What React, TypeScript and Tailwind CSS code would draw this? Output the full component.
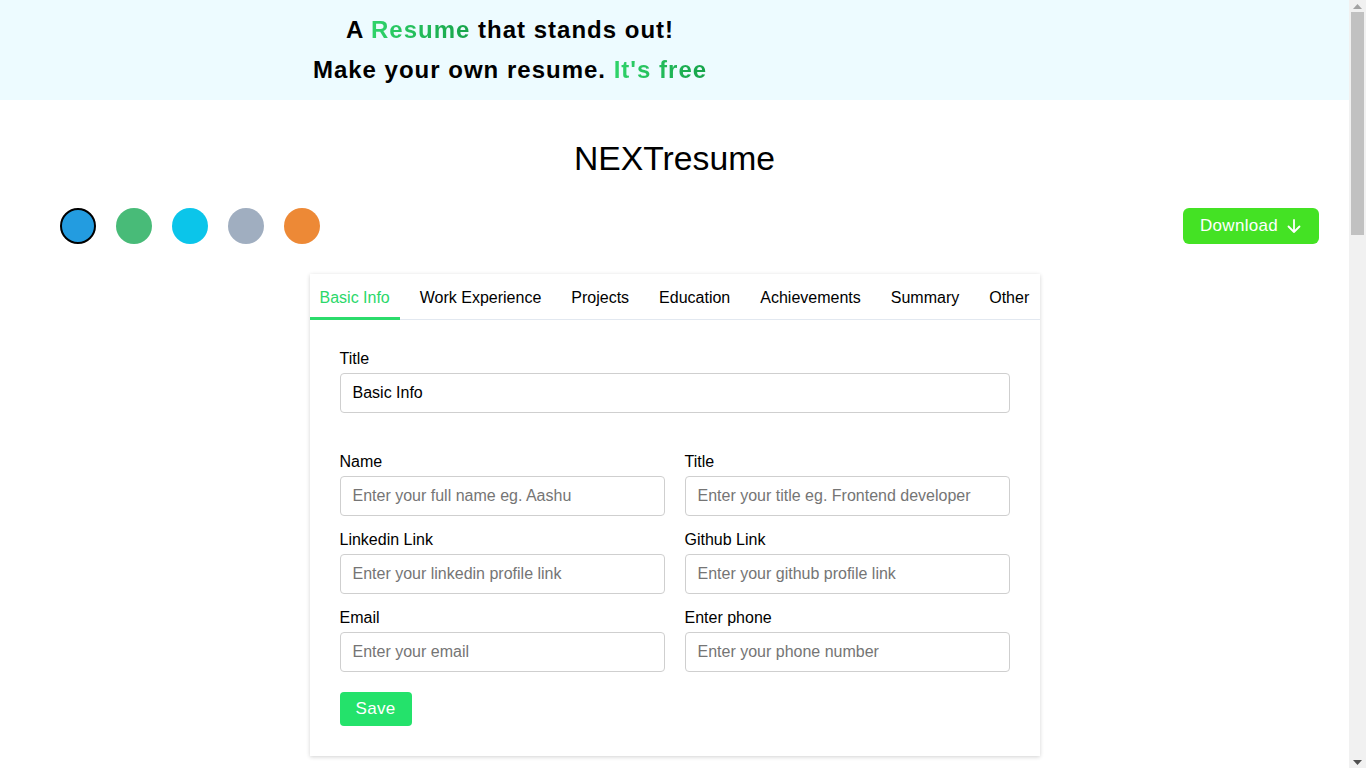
import React, { useState } from 'react';

const COLORS = ['#239ce0', '#48bb78', '#0bc5ea', '#a0aec0', '#ed8936'];

const TABS = ['Basic Info', 'Work Experience', 'Projects', 'Education', 'Achievements', 'Summary', 'Other'];

const FIELDS = [
  { label: 'Name', placeholder: 'Enter your full name eg. Aashu' },
  { label: 'Title', placeholder: 'Enter your title eg. Frontend developer' },
  { label: 'Linkedin Link', placeholder: 'Enter your linkedin profile link' },
  { label: 'Github Link', placeholder: 'Enter your github profile link' },
  { label: 'Email', placeholder: 'Enter your email' },
  { label: 'Enter phone', placeholder: 'Enter your phone number' },
];

export default function App() {
  const [active, setActive] = useState(0);
  const [color, setColor] = useState(0);

  return (
    <div className="flex h-screen overflow-hidden bg-white text-black font-['Liberation_Sans',Arial,sans-serif]">
      <main className="flex-1 min-w-0">
        {/* banner */}
        <div className="bg-[#edfbff] h-[100px] py-[10px]">
          <div className="w-[1020px] text-center text-[24px] font-bold tracking-[1px] leading-[40px]">
            <div>
              A{' '}
              <span className="bg-gradient-to-r from-[#2fd46a] to-[#16a34a] bg-clip-text text-transparent">Resume</span>{' '}
              that stands out!
            </div>
            <div>
              Make your own resume.{' '}
              <span className="bg-gradient-to-r from-[#2fd46a] to-[#16a34a] bg-clip-text text-transparent">It's free</span>
            </div>
          </div>
        </div>

        <h1 className="pt-[38px] text-center text-[33.7px] leading-[40px] font-normal">NEXTresume</h1>

        {/* colours + download */}
        <div className="mt-[30px] flex items-center justify-between pl-[60px] pr-[30px]">
          <div className="flex gap-[20px]">
            {COLORS.map((c, i) => (
              <button
                key={c}
                onClick={() => setColor(i)}
                style={{ backgroundColor: c }}
                className={`w-[36px] h-[36px] rounded-full ${color === i ? 'border-2 border-black' : ''}`}
              />
            ))}
          </div>
          <button className="h-[36px] w-[136px] rounded-[6px] bg-[#44e224] text-white text-[17px] tracking-[0.3px] flex items-center justify-center gap-[8px]">
            Download
            <svg width="16" height="16" viewBox="0 0 16 16" fill="none" stroke="currentColor" strokeWidth="1.8" strokeLinecap="round" strokeLinejoin="round">
              <path d="M8 2v12M2.5 8.5 8 14l5.5-5.5" />
            </svg>
          </button>
        </div>

        {/* editor card */}
        <div className="mt-[30px] mx-auto w-[730px] bg-white shadow-[0_1px_4px_rgba(0,0,0,0.18)]">
          <div className="flex h-[46px] border-b border-[#e2e8f0]">
            {TABS.map((t, i) => (
              <button
                key={t}
                onClick={() => setActive(i)}
                className={`h-[46px] pt-[4px] text-[16px] whitespace-nowrap border-b-[3px] -mb-px ${
                  i === 0 ? 'px-[10px] mr-[5px]' : 'px-[15px]'
                } ${active === i ? 'text-[#2bd86a] border-[#2bdc6c]' : 'text-black border-transparent'}`}
              >
                {t}
              </button>
            ))}
          </div>

          <div className="px-[30px] pt-[29px] pb-[30px]">
            <label className="block text-[16px] leading-[20px] mb-[4px]">Title</label>
            <input
              defaultValue="Basic Info"
              className="w-full h-[40px] rounded-[4px] border border-[#cfcfcf] px-[12px] text-[16px] outline-none"
            />

            <div className="mt-[39px] grid grid-cols-2 gap-x-[20px] gap-y-[14px]">
              {FIELDS.map(f => (
                <div key={f.label}>
                  <label className="block text-[16px] leading-[20px] mb-[4px]">{f.label}</label>
                  <input
                    placeholder={f.placeholder}
                    className="w-full h-[40px] rounded-[4px] border border-[#cfcfcf] px-[12px] text-[16px] outline-none placeholder:text-[#757575]"
                  />
                </div>
              ))}
            </div>

            <button className="mt-[20px] h-[34px] w-[72px] rounded-[4px] bg-[#24e26b] text-white text-[17px] tracking-[0.3px]">
              Save
            </button>
          </div>
        </div>
      </main>

      {/* page scrollbar */}
      <aside className="w-[17px] shrink-0 bg-[#f1f1f1] flex flex-col items-center">
        <div className="h-[12px] flex items-center justify-center text-[#a3a3a3]">
          <svg width="9" height="5" viewBox="0 0 9 5" fill="currentColor"><path d="M4.5 0 9 5H0z" /></svg>
        </div>
        <div className="w-[13px] h-[223px] bg-[#c1c1c1]" />
        <div className="flex-1" />
        <div className="h-[12px] flex items-center justify-center text-[#505050]">
          <svg width="9" height="5" viewBox="0 0 9 5" fill="currentColor"><path d="M0 0h9L4.5 5z" /></svg>
        </div>
      </aside>
    </div>
  );
}
